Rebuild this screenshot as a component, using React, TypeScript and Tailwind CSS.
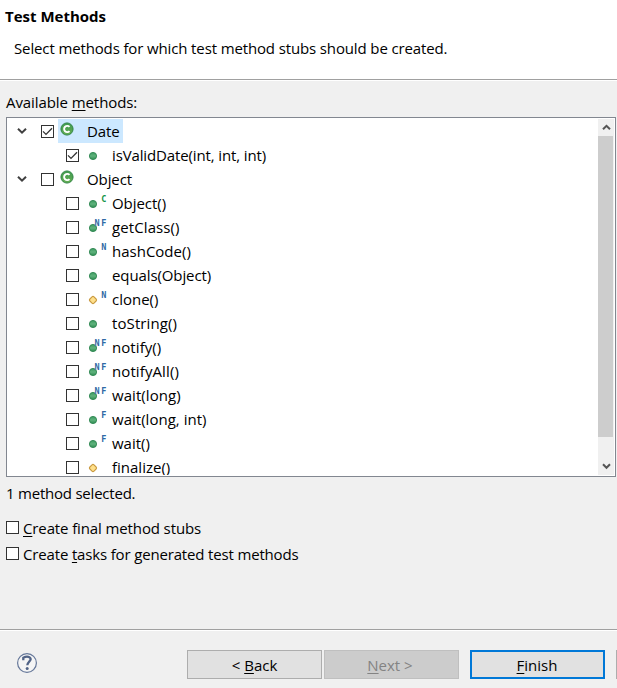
import React from 'react';

type Method = { name: string; tag?: string; kind?: 'public' | 'protected'; checked?: boolean; track: string };

const OBJECT_METHODS: Method[] = [
  { name: 'Object()', tag: 'C', track: 'tracking-[-0.05px]' },
  { name: 'getClass()', tag: 'NF', track: 'tracking-[0.1px]' },
  { name: 'hashCode()', tag: 'N', track: 'tracking-[0px]' },
  { name: 'equals(Object)', track: 'tracking-[-0.1px]' },
  { name: 'clone()', tag: 'N', kind: 'protected', track: 'tracking-[0px]' },
  { name: 'toString()', track: 'tracking-[0.1px]' },
  { name: 'notify()', tag: 'NF', track: 'tracking-[0.07px]' },
  { name: 'notifyAll()', tag: 'NF', track: 'tracking-[0.1px]' },
  { name: 'wait(long)', tag: 'NF', track: 'tracking-[0.07px]' },
  { name: 'wait(long, int)', tag: 'F', track: 'tracking-[0.02px]' },
  { name: 'wait()', tag: 'F', track: 'tracking-[0px]' },
  { name: 'finalize()', kind: 'protected', track: 'tracking-[0px]' },
];

function Checkbox({ checked = false }: { checked?: boolean }) {
  return (
    <span className="block size-[13px] shrink-0 border border-[#333333] bg-white">
      {checked && (
        <svg width="11" height="11" viewBox="0 0 11 11" fill="none" stroke="#333" strokeWidth="1.3">
          <path d="M1 5.4 4 8.4 10 2.2" />
        </svg>
      )}
    </span>
  );
}

function Chevron() {
  return (
    <svg className="shrink-0" width="10" height="8" viewBox="0 0 10 8" fill="none" stroke="#404040" strokeWidth="2">
      <path d="M1 1.7 5 5.7 9 1.7" />
    </svg>
  );
}

function ClassIcon() {
  return (
    <svg className="block shrink-0" width="14" height="14" viewBox="0 0 14 14">
      <defs>
        <linearGradient id="cls" x1="0" y1="0" x2="0" y2="1">
          <stop offset="0" stopColor="#3f9a50" />
          <stop offset="1" stopColor="#65ad52" />
        </linearGradient>
      </defs>
      <circle cx="7" cy="7" r="6.1" fill="url(#cls)" stroke="#28803f" strokeWidth=".9" />
      <path d="M9.5 4.9A3.1 3.1 0 1 0 9.5 9.1" fill="none" stroke="#fff" strokeWidth="1.9" />
    </svg>
  );
}

function MethodIcon({ kind = 'public', tag = '' }: { kind?: 'public' | 'protected'; tag?: string }) {
  const color = tag === 'C' ? '#159447' : '#306aa5';
  return (
    <svg className="block shrink-0" width="22" height="24" viewBox="0 0 22 24">
      <defs>
        <linearGradient id="pub" x1="0" y1="0" x2="0" y2="1">
          <stop offset="0" stopColor="#3c9a60" />
          <stop offset=".5" stopColor="#5fb27c" />
          <stop offset="1" stopColor="#2f8c52" />
        </linearGradient>
      </defs>
      {kind === 'public' ? (
        <circle cx="6" cy="13" r="3.6" fill="url(#pub)" stroke="#2c8650" strokeWidth=".9" />
      ) : (
        <path d="M5 9.9Q6 8.9 7 9.9L9.1 12Q10.1 13 9.1 14L7 16.1Q6 17.1 5 16.1L2.9 14Q1.9 13 2.9 12Z" fill="#ffe08b" stroke="#c99a40" strokeWidth="1.1" />
      )}
      {tag === 'NF' && <path d="M8 4h5v7H8Z" fill="#fff" fillOpacity=".65" />}
      <g fill={color} fontFamily="'DejaVu Sans Mono', monospace" fontWeight="700" fontSize="8.5">
        {tag === 'NF' && <text x="7.6" y="11">N</text>}
        {tag !== '' && <text x="14.2" y="11">{tag === 'NF' ? 'F' : tag}</text>}
      </g>
    </svg>
  );
}

function ClassRow({ name, checked, selected }: { name: string; checked?: boolean; selected?: boolean }) {
  return (
    <div className="flex h-6 shrink-0 items-center pl-[9px]">
      <Chevron />
      <span className="pl-[14px]"><Checkbox checked={checked} /></span>
      <div className={`ml-1 flex h-6 w-[65px] pl-[2px] pt-[3px] ${selected ? 'bg-[#cce8ff]' : ''}`}>
        <ClassIcon />
        <span className="ml-[13px] leading-[18px] tracking-[-0.1px]">{name}</span>
      </div>
    </div>
  );
}

function MethodRow({ name, tag, kind, checked, track }: Method) {
  return (
    <div className="flex h-6 shrink-0 items-center pl-[58px]">
      <Checkbox checked={checked} />
      <span className="pl-2"><MethodIcon tag={tag} kind={kind} /></span>
      <span className={`ml-[3px] leading-6 ${track}`}>{name}</span>
    </div>
  );
}

function ScrollArrow({ up = false }: { up?: boolean }) {
  return (
    <svg width="9" height="7" viewBox="0 0 9 7" fill="none" stroke="#555" strokeWidth="2">
      <path d={up ? 'M1 5.3 4.5 1.8 8 5.3' : 'M1 1.3 4.5 4.8 8 1.3'} />
    </svg>
  );
}

function Key({ children }: { children: string }) {
  return <span className="underline decoration-1 underline-offset-2">{children}</span>;
}

export default function App() {
  return (
    <main className="flex h-[688px] w-[617px] flex-col overflow-hidden whitespace-pre bg-[#f0f0f0] font-['Open_Sans','Noto_Sans',sans-serif] text-[15px] text-black">
      <header className="h-[80px] shrink-0 border-b border-[#a0a0a0] bg-white">
        <h1 className="pl-[5px] pt-[6px] text-[15px] font-bold leading-5">Test Methods</h1>
        <p className="pl-[14px] pt-3 leading-5 tracking-[-0.13px]">Select methods for which test method stubs should be created.</p>
      </header>
      <div className="flex h-[37px] shrink-0 items-center border-t border-white pl-[6px] pt-[6px] leading-5 tracking-[-0.08px]">
        Available <Key>m</Key>ethods:
      </div>
      <section className="ml-[6px] flex h-[360px] w-[610px] shrink-0 border border-[#828790] bg-white p-px">
        <div className="flex h-[356px] flex-1 flex-col overflow-hidden">
          <ClassRow name="Date" checked selected />
          <MethodRow name="isValidDate(int, int, int)" checked track="tracking-[-0.13px]" />
          <ClassRow name="Object" />
          {OBJECT_METHODS.map((m) => <MethodRow key={m.name} {...m} />)}
        </div>
        <div className="flex w-4 flex-col items-center bg-[#f0f0f0]">
          <div className="flex h-[17px] items-center"><ScrollArrow up /></div>
          <div className="h-[301px] w-[15px] self-start bg-[#cdcdcd]" />
          <div className="mt-auto flex h-[17px] items-center"><ScrollArrow /></div>
        </div>
      </section>
      <p className="h-[44px] shrink-0 pl-[6px] pt-[6px] leading-5 tracking-[-0.22px]">1 method selected.</p>
      <label className="flex h-[13px] shrink-0 items-center gap-1 pl-[6px]">
        <Checkbox /><span className="leading-5 tracking-[-0.12px]"><Key>C</Key>reate final method stubs</span>
      </label>
      <label className="mt-[13px] flex h-[13px] shrink-0 items-center gap-1 pl-[6px]">
        <Checkbox /><span className="leading-5 tracking-[-0.16px]">Create <Key>t</Key>asks for generated test methods</span>
      </label>
      <footer className="mt-auto h-[59px] w-[617px] shrink-0 border-t border-[#a0a0a0]">
        <div className="flex h-[58px] border-t border-white pt-[19px]">
          <svg className="ml-4 mt-[2px] shrink-0" width="22" height="22" viewBox="0 0 22 22">
            <circle cx="11" cy="11" r="9.4" fill="#f5f5f5" stroke="#657799" strokeWidth="1.2" />
            <path d="M7.3 8.3V5.8Q11 3.6 13.6 5.4C17 8.3 11.3 9.5 11.3 13.3" fill="none" stroke="#526487" strokeWidth="2.3" />
            <circle cx="11.2" cy="16.5" r="1.5" fill="#526487" />
          </svg>
          <button className="ml-[149px] h-[29px] w-[135px] shrink-0 border border-[#adadad] bg-[#e1e1e1] pt-[2px] leading-[25px]">&lt; <Key>B</Key>ack</button>
          <button className="ml-[2px] h-[29px] w-[135px] shrink-0 border border-[#bfbfbf] bg-[#cccccc] pr-[3px] pt-[2px] leading-[25px] text-[#838383]"><Key>N</Key>ext &gt;</button>
          <button className="ml-[11px] h-[29px] w-[135px] shrink-0 border-2 border-[#0078d7] bg-[#e1e1e1] pr-[1px] pt-[2px] leading-[23px]"><Key>F</Key>inish</button>
          <div className="ml-[11px] h-[29px] w-px shrink-0 bg-[#adadad]" />
        </div>
      </footer>
    </main>
  );
}
